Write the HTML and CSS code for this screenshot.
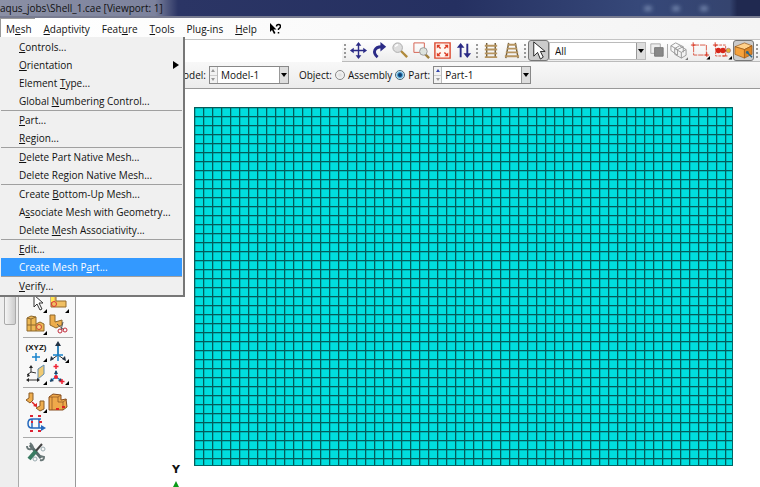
FILE: index.html
```html
<!doctype html>
<html lang="en">

<head>
  <title>Shell_1.cae [Viewport: 1]</title>
  <meta charset="UTF-8">
  <link rel="stylesheet" href="styles.css">
</head>

<body>
  <header class="titlebar"><span>aqus_jobs\Shell_1.cae [Viewport: 1]</span><i></i><i></i><i></i></header>

  <nav class="menubar">
    <button class="open">M<u>e</u>sh</button>
    <button><u>A</u>daptivity</button>
    <button>Feat<u>u</u>re</button>
    <button><u>T</u>ools</button>
    <button>Plu<u>g</u>-ins</button>
    <button><u>H</u>elp</button>
    <button aria-label="Context help">
      <svg width="12" height="12" viewBox="0 0 12 12"><path d="M1 0v9l2-2 2 4 1.500-1-2-3.500h3z" /><path d="M7.500 3.500q0-2 2-2t2 2q0 1-2 2.500v1M9.500 9v1.500" fill="none" stroke="#000" stroke-width="1.500" /></svg>
    </button>

    <div class="dropdown">
      <button><u>C</u>ontrols...</button>
      <button class="sub"><u>O</u>rientation</button>
      <button>Element <u>T</u>ype...</button>
      <button>Global <u>N</u>umbering Control...</button>
      <hr>
      <button><u>P</u>art...</button>
      <button><u>R</u>egion...</button>
      <hr>
      <button><u>D</u>elete Part Native Mesh...</button>
      <button>Delete Re<u>g</u>ion Native Mesh...</button>
      <hr>
      <button>Create <u>B</u>ottom-Up Mesh...</button>
      <button>A<u>s</u>sociate Mesh with Geometry...</button>
      <button>Delete <u>M</u>esh Associativity...</button>
      <hr>
      <button><u>E</u>dit...</button>
      <button class="active">Create Mesh P<u>a</u>rt...</button>
      <hr>
      <button><u>V</u>erify...</button>
    </div>
  </nav>

  <div class="toolbar">
    <span class="grip"></span>
    <button class="tool" aria-label="Pan"><svg viewBox="0 0 20 20"><path d="M10 3v14M3 10h14" stroke="#2b2b86" stroke-width="1.500" /><path d="M10 1l3 4H7zM10 19l3-4H7zM1 10l4-3v6zM19 10l-4-3v6z" fill="#2b2b86" /></svg></button>
    <button class="tool" aria-label="Rotate"><svg viewBox="0 0 20 20"><path d="M8 17C2 12 5 6 12 6" fill="none" stroke="#2b2b86" stroke-width="3" /><path d="M11 1l6 5-6 5z" fill="#2b2b86" /></svg></button>
    <button class="tool" aria-label="Magnify"><svg viewBox="0 0 20 20"><path d="M10 10l7 7" stroke="#b08a3c" stroke-width="2.500" /><circle cx="7" cy="7" r="5" fill="#ddd" stroke="#aaa" /><path d="M4.500 6q1-2 3-2" fill="none" stroke="#fff" stroke-width="1.500" /></svg></button>
    <button class="tool" aria-label="Box zoom"><svg viewBox="0 0 20 20"><path d="M2 2h11v10H2z" fill="none" stroke="#d4604f" /><path d="M13 13l5 5" stroke="#a0803c" stroke-width="2.500" /><circle cx="12" cy="11" r="4" fill="#dde3dd" stroke="#999" /></svg></button>
    <button class="tool" aria-label="Fit view"><svg viewBox="0 0 20 20"><path d="M2 2h16v16H2z" fill="#fff5ef" stroke="#dc4a30" stroke-width="1.500" /><path d="M5 5l3 3M15 5l-3 3M5 15l3-3M15 15l-3-3" stroke="#dc3c24" stroke-width="1.500" /><path d="M4 4h4L4 8zM16 4h-4l4 4zM4 16h4l-4-4zM16 16v-4l-4 4z" fill="#dc3c24" /></svg></button>
    <button class="tool" aria-label="Cycle views"><svg viewBox="0 0 20 20"><path d="M7 5v12M14 3v12" stroke="#2b2b86" stroke-width="2" /><path d="M7 2l4 5H3zM14 18l4-5h-8z" fill="#2b2b86" /></svg></button>
    <span class="grip"></span>
    <button class="tool" aria-label="Parallel view"><svg viewBox="0 0 20 20"><path d="M6 2v16M15 2v16" stroke="#6f5d3b" stroke-width="1.500" /><path d="M4 5h13M4 9h13M4 13h13M4 17h13" stroke="#b79560" stroke-width="2" /></svg></button>
    <button class="tool" aria-label="Perspective view"><svg viewBox="0 0 20 20"><path d="M7 2L4 18M14 2l3 16" stroke="#6f5d3b" stroke-width="1.500" /><path d="M6 4h9M5 8h11M4 12h13M3 16h15" stroke="#b79560" stroke-width="2" /></svg></button>
    <span class="grip"></span>
    <button class="tool pressed" aria-label="Select"><svg viewBox="0 0 20 20"><path d="M5 1v15l4-4 3 7 3-2-3-6h5z" fill="#fff" stroke="#222" /></svg></button>
    <span class="picker filter"><select aria-label="Selection filter"><option>All</option></select></span>
    <button class="tool" aria-label="Select inside"><svg viewBox="0 0 20 20"><path d="M4 3h10v10H4z" fill="#eee" stroke="#aaa" /><path d="M8 7h9v9H8z" fill="#888" stroke="#777" /></svg></button>
    <span class="divider"></span>
    <button class="tool" aria-label="Drag shape"><svg viewBox="0 0 20 20"><path d="M2 5l5-3 8 4v6M2 5l7 4 6-3M2 5v5l7 5V9M6 8l5-3 7 4v6l-5 3-7-4zM6 8l7 4 5-3M13 12v6" fill="none" stroke="#999" /><path d="M20 17v3h-3z" fill="#777" /></svg></button>
    <button class="tool wide" aria-label="Rectangle selection"><svg viewBox="0 0 22 20"><path d="M4 4h14v11H4z" fill="none" stroke="#d8503c" stroke-dasharray="6 1" /><path d="M1 4h5M3.500 1v5M16 15h5M18.500 12v5" stroke="#d8301c" /><path d="M22 16v4h-4z" /></svg></button>
    <button class="tool wide" aria-label="Selection through"><svg viewBox="0 0 22 20"><path d="M4 4h11v12H4z" fill="none" stroke="#d8503c" stroke-dasharray="3 1" /><path d="M1 4h5M3.500 1v5M12 16h5" stroke="#d8301c" /><path d="M5 10h14" stroke="#444" /><circle cx="7" cy="10" r="3" fill="#d62518" /><circle cx="12" cy="10" r="3" fill="#d62518" /><circle cx="18" cy="10" r="2.500" fill="#e0b33a" stroke="#846" stroke-width=".5" /><path d="M22 16v4h-4z" /></svg></button>
    <button class="tool pressed" aria-label="Shaded"><svg viewBox="0 0 20 20"><path d="M1 6l10-4 8 3-8 4z" fill="#ffd08a" stroke="#955413" stroke-width=".7" /><path d="M1 6l10 3v9L1 14z" fill="#f6a23c" stroke="#955413" stroke-width=".7" /><path d="M11 9l8-4v9l-8 4z" fill="#dc8424" stroke="#955413" stroke-width=".7" /><path d="M14 12l5 5" stroke="#28678c" stroke-width="1.500" /><circle cx="14" cy="12" r="1.500" fill="#28678c" /></svg></button>
    <span class="grip"></span>
  </div>

  <div class="context">
    <label for="model">Model:</label>
    <span class="picker model">
      <span class="spin"><button class="up" aria-label="Previous model"></button><button class="down" aria-label="Next model"></button></span>
      <select id="model"><option>Model-1</option></select>
    </span>
    <span class="object">Object:</span>
    <label><input type="radio" name="object"> Assembly</label>
    <label><input type="radio" name="object" checked> Part:</label>
    <span class="picker part">
      <span class="spin"><button class="up blue" aria-label="Previous part"></button><button class="down" aria-label="Next part"></button></span>
      <select aria-label="Part"><option>Part-1</option></select>
    </span>
  </div>

  <main class="workspace">
    <div class="scroll"><div class="thumb"></div></div>
    <div class="palette">
      <div class="group">
        <button aria-label="Select mesh"><svg viewBox="0 0 22 22"><path d="M9 4v12l3-3 3 6 2-1-3-6h4z" fill="#fff" stroke="#333" /><path d="M22 18v4h-4z" /></svg></button>
        <button aria-label="Seed part"><svg viewBox="0 0 22 22"><path d="M4 2h5v8h10v6H4z" fill="#f0bf62" stroke="#94682b" /><path d="M4 2h3v9H4z" fill="#ffe94f" /><circle cx="7" cy="13" r="2.500" fill="none" stroke="#d33" /><path d="M22 18v4h-4z" /></svg></button>
        <button aria-label="Mesh part"><svg viewBox="0 0 22 22"><path d="M2 5l4-2 5 1v7l4-2 4 2v7H2z" fill="#edb854" stroke="#8c672c" /><path d="M2 5l4 1v12M6 6l5-2M11 11v7M2 12h9" fill="none" stroke="#8c672c" /><circle cx="14" cy="14" r="2.500" fill="#f8ce80" stroke="#c43" /><path d="M22 18v4h-4z" /></svg></button>
        <button aria-label="Delete mesh"><svg viewBox="0 0 22 22"><path d="M3 2h5v7l7-2v5l-6 3-6-3z" fill="#edad4d" stroke="#8c672c" /><path d="M10 11l7 6M16 9l-2 8" stroke="#555" /><circle cx="13" cy="18" r="2" fill="none" stroke="#c22b3c" /><circle cx="18" cy="17" r="2" fill="none" stroke="#c22b3c" /></svg></button>
      </div>
      <div class="group">
        <button class="xyz" aria-label="Datum point">(XYZ)<svg viewBox="0 0 22 9"><path d="M11 0v8M7 4h8" stroke="#1682cc" stroke-width="1.500" /><path d="M22 5v4h-4z" /></svg></button>
        <button aria-label="Datum axis"><svg viewBox="0 0 22 22"><path d="M11 3v11l-7 5M11 14l7 5" fill="none" stroke="#333" /><path d="M11 2v18M6 14h10" stroke="#1682cc" stroke-width="1.500" /><path d="M11 0l3 5H8zM3 20l1-5 3 3zM19 20l-1-5-3 3z" fill="#234" /><path d="M22 18v4h-4z" /></svg></button>
        <button aria-label="Datum plane"><svg viewBox="0 0 22 22"><path d="M13 6l6-4v9l-6 5z" fill="#f1ca72" stroke="#608cb0" /><path d="M6 4v5l5 1M6 9l-4 3M3 17h10" fill="none" stroke="#333" /><path d="M6 2l2 3H4zM2 14l1-4 2 3zM1 17l3-2v4zM15 17l-3-2v4z" fill="#222" /><path d="M22 18v4h-4z" /></svg></button>
        <button aria-label="Datum system"><svg viewBox="0 0 22 22"><path d="M9 8v6l-6 4M9 14l6 4" fill="none" stroke="#1682cc" stroke-width="1.500" /><path d="M9 7l2 4H7zM3 19l1-4 3 3zM15 19l-1-4-3 3z" fill="#246" /><circle cx="9" cy="14" r="2" fill="#e23" /><path d="M9 1v5M6.500 3.500h5M15 16v5M12.500 18.500h5" stroke="#e23" stroke-width="1.500" /><path d="M22 18v4h-4z" /></svg></button>
      </div>
      <div class="group">
        <button aria-label="Copy mesh"><svg viewBox="0 0 22 22"><path d="M4 2h4v7l-3 3-4-3 3-2zM15 10h4v8l-4 2-4-3 4-2z" fill="#efae4f" stroke="#8c5c25" /><path d="M7 11l4 4" stroke="#d22" stroke-width="1.500" /><path d="M12 16v-4l-4 3z" fill="#d22" /><path d="M22 18v4h-4z" /></svg></button>
        <button aria-label="Partition cell"><svg viewBox="0 0 22 22"><path d="M2 6l4-3 8 1v5l5-1 1 8-4 3H2z" fill="#efa94a" stroke="#874e20" /><path d="M2 6h9v5h5v8M11 6l3-2M16 11l4-3M5 6v13" fill="none" stroke="#874e20" stroke-width=".7" /><path d="M9 18h3M15 16h3" stroke="#d22" stroke-width="2" /></svg></button>
        <button aria-label="Virtual topology"><svg viewBox="0 0 22 22"><path d="M16 6H7q-4 0-4 4.500t4 4.500h11M14 6v9M7 6v9" fill="none" stroke="#2468bd" stroke-width="1.500" /><path d="M16 12l5 3-5 3z" fill="#2468bd" /><path d="M5 3h3M13 3h3M5 18h3M13 18h3M14 9h3M6 9h2" stroke="#d23" stroke-width="2" /></svg></button>
      </div>
      <div class="group">
        <button aria-label="Mesh tools"><svg viewBox="0 0 22 22"><path d="M5 4l11 13" stroke="#596b6b" stroke-width="3" /><path d="M2 5q0 4 4 3T5 2M15 19q4 1 4-3l-4-1" fill="none" stroke="#697777" stroke-width="2" /><path d="M17 3l-7 8" stroke="#444" stroke-width="2" /><path d="M11 10l-7 8" stroke="#397b62" stroke-width="4" /><circle cx="18" cy="8" r="2" fill="none" stroke="#9aabb0" /><circle cx="10" cy="18" r="2" fill="none" stroke="#9aabb0" /></svg></button>
      </div>
    </div>
    <section class="viewport">
      <div class="mesh"></div>
      <div class="triad">Y<svg width="10" height="16" viewBox="0 0 10 16"><path d="M5 0l4 8H1zM4 7h2v9H4z" fill="#0a9b18" /></svg></div>
    </section>
  </main>
</body>

</html>
```

FILE: styles.css
```css
* {
  box-sizing: border-box;
}

html,
body {
  height: 100%;
  margin: 0;
}

body {
  display: flex;
  flex-direction: column;
  overflow: hidden;
  background: #fff;
  color: #111;
  font: 10px/16px "Open Sans", "Noto Sans", sans-serif;
}

button,
select {
  font: inherit;
  color: inherit;
  border: 0;
  padding: 0;
  margin: 0;
  background: none;
}

u {
  text-underline-offset: 1px;
}

svg {
  display: block;
}

.titlebar {
  flex: none;
  display: flex;
  align-items: center;
  gap: 20px;
  height: 18px;
  padding-right: 52px;
  border-bottom: 2px solid #777b90;
  background: linear-gradient(90deg, #8b90a5 0, #7c829d 155px, #2b3565 178px, #253061 60%, #364879 84%, #35446f 96%, #202950 97%);
}

.titlebar span {
  flex: 1;
}

.titlebar i {
  width: 8px;
  height: 5px;
  border-radius: 3px;
  background: #7386ad;
  filter: blur(2px);
}

.menubar {
  position: relative;
  flex: none;
  display: flex;
  height: 22px;
  border-bottom: 1px solid #c4c4c4;
  background: linear-gradient(90deg, #fff, #f4f4f4);
}

.menubar > button {
  padding: 0 6px;
}

.menubar > .open {
  padding: 0 3px 0 5px;
  margin-right: 3px;
  border-top: 1px solid #999;
  border-left: 1px solid #999;
}

.dropdown {
  position: absolute;
  z-index: 2;
  top: 19px;
  left: 0;
  width: 185px;
  padding: 1px 1px 0;
  border-right: 2px solid #777;
  border-bottom: 2px solid #777;
  background: #f0f0f0;
}

.dropdown button {
  display: block;
  width: 100%;
  height: 18px;
  padding-left: 18px;
  text-align: left;
  white-space: nowrap;
}

.dropdown .sub {
  display: flex;
  align-items: center;
  padding-right: 3px;
}

.dropdown .sub::after {
  content: "";
  margin-left: auto;
  border: 4px solid transparent;
  border-left: 6px solid #000;
  border-right: 0;
}

.dropdown .active {
  background: #3399ff;
  color: #fff;
}

.dropdown hr {
  height: 1px;
  margin: 0;
  border: 0;
  background: #a0a0a0;
}

.toolbar {
  flex: none;
  align-self: flex-end;
  display: flex;
  align-items: center;
  height: 22px;
  width: 418px;
  border-bottom: 1px solid #bbb;
  background: linear-gradient(#fff, #ededed);
}

.grip {
  flex: none;
  width: 2px;
  height: 14px;
  margin: 0 2px;
  background: repeating-linear-gradient(#999 0 2px, transparent 2px 4px);
}

.tool {
  flex: none;
  width: 21px;
  height: 21px;
  padding: 1px;
}

.tool svg {
  width: 100%;
  height: 100%;
}

.wide {
  width: 22px;
}

.pressed {
  padding: 0;
  border: 1px solid #777;
  border-radius: 3px;
  background: #ccc;
}

.divider {
  width: 1px;
  height: 14px;
  background: #aaa;
}

.picker {
  position: relative;
  display: flex;
  height: 18px;
  border: 1px solid #888;
  background: #fff;
}

.picker::after {
  content: "";
  position: absolute;
  right: 1px;
  top: 6px;
  border: 3px solid transparent;
  border-top: 4px solid #000;
  border-bottom: 0;
  pointer-events: none;
}

.picker select {
  flex: 1;
  min-width: 0;
  appearance: none;
  padding-left: 3px;
  background: linear-gradient(90deg, #999 1px, #ddd 1px) right / 9px 100% no-repeat;
}

.filter {
  flex: 1;
  border-color: #bbb;
}

.filter select {
  padding-left: 5px;
}

.context {
  flex: none;
  display: flex;
  align-items: center;
  height: 27px;
  padding-left: 174px;
  border-bottom: 1px solid #999;
  background: linear-gradient(#f8f8f8, #ececec);
}

.context label {
  display: flex;
  align-items: center;
  gap: 3px;
  margin-right: 3px;
}

.context input {
  appearance: none;
  width: 10px;
  height: 10px;
  margin: 0;
  border: 1px solid #888;
  border-radius: 50%;
  background: radial-gradient(#ddd, #fff);
}

.context input:checked {
  border-color: #467;
  background: radial-gradient(#123f70 25%, #4ba4d8 45%, #e8f4fa 70%);
}

.object {
  margin: 0 3px 0 10px;
}

.model {
  width: 80px;
}

.part {
  width: 98px;
}

.spin {
  display: flex;
  flex-direction: column;
  width: 8px;
  border-right: 1px solid #bbb;
  background: #f2f2f2;
}

.spin button {
  flex: 1;
  display: flex;
  align-items: center;
  justify-content: center;
}

.spin button::before {
  content: "";
  border: 2px solid transparent;
}

.spin .up {
  border-bottom: 1px solid #ccc;
}

.spin .up::before {
  border-top: 0;
  border-bottom: 3px solid #999;
}

.spin .down::before {
  border-bottom: 0;
  border-top: 3px solid #999;
}

.spin .blue::before {
  border-bottom-color: #34a;
}

.workspace {
  flex: 1;
  display: flex;
  min-height: 0;
}

.scroll {
  flex: none;
  width: 18px;
  padding: 0 2px 0 4px;
  background: #eee;
}

.thumb {
  height: 236px;
  border: 1px solid #aaa;
  border-radius: 2px;
  background: linear-gradient(90deg, #f5f5f5, #ccc);
}

.palette {
  flex: none;
  width: 58px;
  padding: 199px 2px 0 4px;
  border-left: 1px solid #aaa;
  border-right: 1px solid #999;
  background: #f8f8f8;
}

.group {
  display: grid;
  grid-template-columns: 22px 22px;
  grid-auto-rows: 22px;
  padding: 3px 2px 2px;
  border-bottom: 1px solid #aaa;
}

.group:last-child {
  border: 0;
}

.xyz {
  font: bold 8px/10px "Liberation Sans", sans-serif;
  white-space: nowrap;
}

.viewport {
  position: relative;
  flex: 1;
  padding: 18px 27px 0 118px;
  background: #fff;
}

/* 9px elements, dark edge with a softer inner side */
.mesh {
  aspect-ratio: 3 / 2;
  border-right: 1px solid #066;
  border-bottom: 1px solid #066;
  background:
    linear-gradient(90deg, #045c5a 1px, rgba(0, 100, 100, .3) 1px 2px, transparent 2px) 0 0 / 9px 9px,
    linear-gradient(#045c5a 1px, rgba(0, 100, 100, .3) 1px 2px, transparent 2px) 0 0 / 9px 9px,
    #00dede;
}

.triad {
  position: absolute;
  left: 95px;
  bottom: -10px;
  display: flex;
  flex-direction: column;
  align-items: center;
  gap: 4px;
  font: bold 11px/14px "DejaVu Sans", sans-serif;
}
```
